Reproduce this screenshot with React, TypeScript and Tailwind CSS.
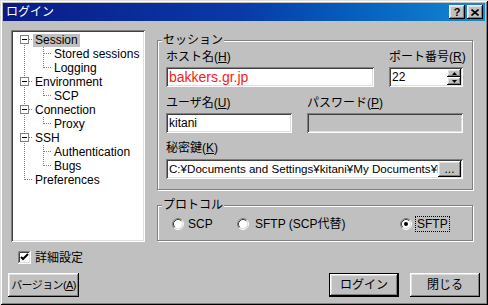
const raised =
  'shadow-[inset_-1px_-1px_#000,inset_1px_1px_#fff,inset_-2px_-2px_#808080,inset_2px_2px_#dfdfdf]';
const sunken =
  'shadow-[inset_1px_1px_#808080,inset_-1px_-1px_#fff,inset_2px_2px_#404040,inset_-2px_-2px_#dfdfdf]';

type Row = {
  label: string;
  level: 0 | 1;
  box?: boolean;
  root: 'full' | 'top' | 'bottom';
  child?: 'full' | 'top';
  selected?: boolean;
};

const rows: Row[] = [
  { label: 'Session', level: 0, box: true, root: 'bottom', selected: true },
  { label: 'Stored sessions', level: 1, root: 'full', child: 'full' },
  { label: 'Logging', level: 1, root: 'full', child: 'top' },
  { label: 'Environment', level: 0, box: true, root: 'full' },
  { label: 'SCP', level: 1, root: 'full', child: 'top' },
  { label: 'Connection', level: 0, box: true, root: 'full' },
  { label: 'Proxy', level: 1, root: 'full', child: 'top' },
  { label: 'SSH', level: 0, box: true, root: 'full' },
  { label: 'Authentication', level: 1, root: 'full', child: 'full' },
  { label: 'Bugs', level: 1, root: 'full', child: 'top' },
  { label: 'Preferences', level: 0, root: 'top' },
];

function Gutter({ row }: { row: Row }) {
  const w = row.level === 0 ? 22 : 41;
  const dot = { stroke: '#808080', strokeDasharray: '1 1', shapeRendering: 'crispEdges' as const };
  const rootY1 = row.root === 'bottom' ? 10 : 0;
  const rootY2 = row.root === 'top' ? 7 : 14;
  return (
    <svg width={w} height={14} className="shrink-0">
      <line x1={13.5} x2={13.5} y1={rootY1} y2={rootY2} {...dot} />
      {row.level === 0 && !row.box && <line x1={14} x2={22} y1={6.5} y2={6.5} {...dot} />}
      {row.box && (
        <>
          <rect x={9.5} y={2.5} width={8} height={8} fill="#fff" stroke="#808080" shapeRendering="crispEdges" />
          <line x1={11} x2={16} y1={6.5} y2={6.5} stroke="#000" shapeRendering="crispEdges" />
          <line x1={18} x2={22} y1={6.5} y2={6.5} {...dot} />
        </>
      )}
      {row.level === 1 && (
        <>
          <line x1={32.5} x2={32.5} y1={0} y2={row.child === 'top' ? 7 : 14} {...dot} />
          <line x1={33} x2={41} y1={6.5} y2={6.5} {...dot} />
        </>
      )}
    </svg>
  );
}

function Radio({ checked }: { checked?: boolean }) {
  return (
    <svg width={12} height={12} className="shrink-0">
      <circle cx={6} cy={6} r={4.5} fill="#fff" />
      <path d="M2.11 9.89 A5.5 5.5 0 0 1 9.89 2.11" fill="none" stroke="#808080" />
      <path d="M9.89 2.11 A5.5 5.5 0 0 1 2.11 9.89" fill="none" stroke="#fff" />
      <path d="M2.82 9.18 A4.5 4.5 0 0 1 9.18 2.82" fill="none" stroke="#404040" />
      <path d="M9.18 2.82 A4.5 4.5 0 0 1 2.82 9.18" fill="none" stroke="#dfdfdf" />
      {checked && <circle cx={6} cy={6} r={2} fill="#000" />}
    </svg>
  );
}

function Label({ text, k }: { text: string; k: string }) {
  return (
    <div className="h-[14px] leading-[14px] whitespace-nowrap">
      {text}(<span className="underline">{k}</span>)
    </div>
  );
}

function SpinArrow({ up }: { up?: boolean }) {
  return (
    <div className={`h-[8px] w-[14px] bg-[#c0c0c0] ${raised} flex items-center justify-center`}>
      <svg width={5} height={3}>
        <path d={up ? 'M2.5 0 L5 3 L0 3 Z' : 'M0 0 L5 0 L2.5 3 Z'} fill="#000" />
      </svg>
    </div>
  );
}

export default function App() {
  return (
    <div className="w-[488px] h-[305px] bg-[#c0c0c0] p-[3px] flex flex-col text-[12px] text-black font-['Liberation_Sans','Noto_Sans_CJK_JP',sans-serif] shadow-[inset_1px_1px_#dfdfdf,inset_-1px_-1px_#000,inset_2px_2px_#fff,inset_-2px_-2px_#808080]">
      {/* Title bar */}
      <div className="h-[18px] bg-linear-to-r from-[#0a1a88] via-[#0a3aa8] to-[#1688d4] flex items-center justify-between pl-[3px] pr-[2px]">
        <span className="text-white leading-[14px]">ログイン</span>
        <div className="flex gap-[2px]">
          <div className={`w-[16px] h-[14px] bg-[#c0c0c0] ${raised} flex items-center justify-center font-bold text-[11px] leading-none`}>
            ?
          </div>
          <div className={`w-[16px] h-[14px] bg-[#c0c0c0] ${raised} flex items-center justify-center`}>
            <svg width={8} height={7}>
              <path d="M0.5 0.5 L7.5 6.5 M7.5 0.5 L0.5 6.5" stroke="#000" strokeWidth={1.6} />
            </svg>
          </div>
        </div>
      </div>

      {/* Body */}
      <div className="flex flex-col px-[5px]">
        <div className="flex mt-[9px]">
          {/* Tree */}
          <div className={`ml-[3px] w-[134px] h-[212px] bg-white ${sunken} pt-[3px] flex flex-col`}>
            {rows.map((r) => (
              <div key={r.label} className="h-[14px] flex items-center">
                <Gutter row={r} />
                <span className={`px-[2px] h-[13px] leading-[13px] whitespace-nowrap ${r.selected ? 'bg-[#c0c0c0]' : ''}`}>
                  {r.label}
                </span>
              </div>
            ))}
          </div>

          {/* Right column */}
          <div className="ml-[12px] w-[316px] flex flex-col">
            {/* Session group */}
            <div className="relative mt-[10px] h-[150px] border border-[#808080] shadow-[inset_1px_1px_#fff,1px_1px_#fff] pt-[9px] pl-[8px]">
              <span className="absolute -top-[8px] left-[4px] px-[1px] bg-[#c0c0c0] leading-[14px]">セッション</span>
              <div className="flex gap-[15px]">
                <div className="w-[208px]">
                  <Label text="ホスト名" k="H" />
                  <div className={`mt-[3px] h-[20px] bg-white ${sunken} pl-[3px] flex items-center text-[14px] text-[#f42020]`}>
                    bakkers.gr.jp
                  </div>
                </div>
                <div className="w-[74px]">
                  <Label text="ポート番号" k="R" />
                  <div className={`mt-[3px] h-[20px] bg-white ${sunken} pl-[3px] pr-[2px] flex items-center justify-between`}>
                    <span>22</span>
                    <div className="flex flex-col">
                      <SpinArrow up />
                      <SpinArrow />
                    </div>
                  </div>
                </div>
              </div>
              <div className="flex gap-[15px] mt-[9px]">
                <div className="w-[126px]">
                  <Label text="ユーザ名" k="U" />
                  <div className={`mt-[3px] h-[20px] bg-white ${sunken} pl-[3px] flex items-center`}>kitani</div>
                </div>
                <div className="w-[156px]">
                  <Label text="パスワード" k="P" />
                  <div className={`mt-[3px] h-[20px] bg-[#c0c0c0] ${sunken}`} />
                </div>
              </div>
              <div className="mt-[8px] w-[297px]">
                <Label text="秘密鍵" k="K" />
                <div className={`mt-[4px] h-[20px] bg-white ${sunken} pl-[3px] pr-[2px] flex items-center`}>
                  <span className="flex-1 min-w-0 overflow-hidden whitespace-nowrap text-[11.6px]">
                    C:¥Documents and Settings¥kitani¥My Documents¥k
                  </span>
                  <div className={`shrink-0 w-[23px] h-[16px] bg-[#c0c0c0] ${raised} flex items-end justify-center leading-[12px] pb-[2px]`}>
                    ...
                  </div>
                </div>
              </div>
            </div>

            {/* Protocol group */}
            <div className="relative mt-[15px] h-[36px] border border-[#808080] shadow-[inset_1px_1px_#fff,1px_1px_#fff] pt-[12px] pl-[14px] flex items-start">
              <span className="absolute -top-[8px] left-[4px] px-[1px] bg-[#c0c0c0] leading-[14px]">プロトコル</span>
              <div className="w-[65px] flex items-center gap-[4px] h-[12px]">
                <Radio />
                <span className="leading-[14px]">SCP</span>
              </div>
              <div className="w-[163px] flex items-center gap-[6px] h-[12px]">
                <Radio />
                <span className="leading-[14px] whitespace-nowrap">SFTP (SCP代替)</span>
              </div>
              <div className="flex items-center gap-[3px] h-[12px]">
                <Radio checked />
                <span className="leading-[14px] border border-dotted border-black px-[1px]">SFTP</span>
              </div>
            </div>
          </div>
        </div>

        {/* Advanced checkbox */}
        <div className="mt-[9px] ml-[10px] h-[13px] flex items-center gap-[4px]">
          <svg width={13} height={13} className="shrink-0">
            <rect x={0} y={0} width={13} height={13} fill="#fff" />
            <path d="M0.5 12 V0.5 H12" fill="none" stroke="#808080" />
            <path d="M1.5 11 V1.5 H11" fill="none" stroke="#404040" />
            <path d="M0 12.5 H12.5 V0" fill="none" stroke="#fff" />
            <path d="M1 11.5 H11.5 V1" fill="none" stroke="#dfdfdf" />
            <path d="M3 6 L5 8 L10 3" fill="none" stroke="#000" strokeWidth={2} />
          </svg>
          <span className="leading-[14px]">詳細設定</span>
        </div>

        {/* Buttons */}
        <div className="mt-[9px] flex items-center">
          <div className={`w-[71px] h-[24px] bg-[#c0c0c0] ${raised} flex items-center justify-center whitespace-nowrap text-[11px] tracking-[-0.6px]`}>
            バージョン(<span className="underline">A</span>)
          </div>
          <div className="ml-auto w-[70px] h-[24px] border border-black">
            <div className={`w-full h-full bg-[#c0c0c0] ${raised} flex items-center justify-center`}>ログイン</div>
          </div>
          <div className={`ml-[11px] w-[70px] h-[24px] bg-[#c0c0c0] ${raised} flex items-center justify-center`}>
            閉じる
          </div>
        </div>
      </div>
    </div>
  );
}
